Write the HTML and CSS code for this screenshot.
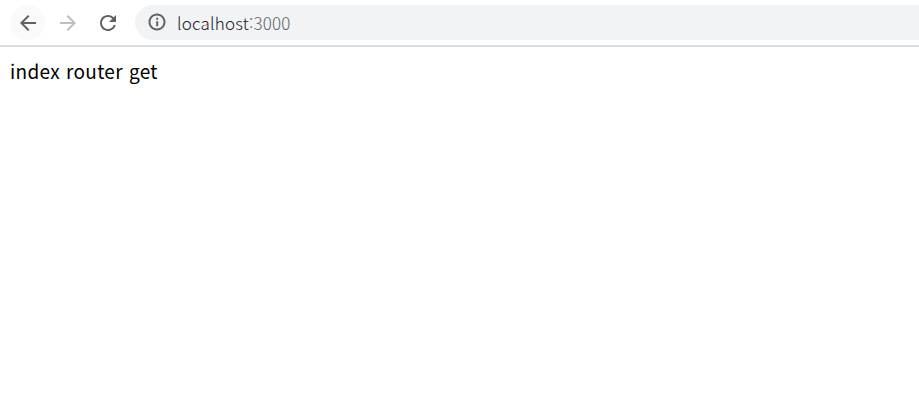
FILE: index.html
```html
<!DOCTYPE html>
<html lang="ko">
<head>
    <meta charset="UTF-8">
    <meta name="viewport" content="width=device-width, initial-scale=1.0">
    <title>localhost:3000</title>
    <link rel="stylesheet" href="styles.css">
</head>
<body>
    <div class="toolbar">
        <div class="nav-btn nav-btn-hover">
            <svg width="24" height="24" viewBox="0 0 24 24"><path fill="#5f6368" d="M20 11H7.83l5.59-5.59L12 4l-8 8 8 8 1.41-1.41L7.83 13H20v-2z"/></svg>
        </div>
        <div class="nav-btn">
            <svg width="24" height="24" viewBox="0 0 24 24"><path fill="#bdbfc2" d="M12 4l-1.41 1.41L16.17 11H4v2h12.17l-5.58 5.59L12 20l8-8z"/></svg>
        </div>
        <div class="nav-btn">
            <svg width="24" height="24" viewBox="0 0 24 24"><path fill="#5f6368" d="M17.65 6.35A7.958 7.958 0 0 0 12 4c-4.42 0-7.99 3.58-7.99 8s3.57 8 7.99 8c3.73 0 6.84-2.55 7.73-6h-2.08A5.99 5.99 0 0 1 12 18c-3.31 0-6-2.69-6-6s2.69-6 6-6c1.66 0 3.14.69 4.22 1.78L13 11h7V4l-2.35 2.35z"/></svg>
        </div>
        <div class="address-bar">
            <svg class="info-icon" width="20" height="20" viewBox="0 0 24 24"><path fill="#5f6368" d="M11 7h2.4v2.4H11zm0 4h2.4v6H11zm1-9.2C6.4 1.8 1.8 6.4 1.8 12S6.4 22.2 12 22.2 22.2 17.6 22.2 12 17.6 1.8 12 1.8zm0 18c-4.3 0-7.8-3.5-7.8-7.8S7.7 4.2 12 4.2s7.8 3.5 7.8 7.8-3.5 7.8-7.8 7.8z"/></svg>
            <span class="host">localhost</span><span class="port">:3000</span>
        </div>
    </div>
    <div class="content">index router get</div>
</body>
</html>
```

FILE: styles.css
```css
body {
    margin: 0;
    background: #fff;
    font-family: "Noto Sans CJK KR", "Noto Sans", sans-serif;
}
.toolbar {
    display: flex;
    align-items: center;
    height: 45px;
    padding-left: 10px;
    border-bottom: 2px solid #dadce0;
}
.nav-btn {
    display: flex;
    align-items: center;
    justify-content: center;
    width: 35px;
    height: 35px;
    margin-right: 5px;
    border-radius: 50%;
}
.nav-btn-hover {
    background: #fafafa;
}
.address-bar {
    display: flex;
    align-items: center;
    flex: 1;
    box-sizing: border-box;
    height: 35px;
    margin-left: 5px;
    padding: 0 0 1px 12px;
    background: #f1f3f4;
    border-radius: 18px 0 0 18px;
    font-size: 17px;
    font-weight: 300;
    letter-spacing: 0.2px;
}
.info-icon {
    margin-right: 10px;
}
.host {
    color: #202124;
}
.port {
    color: #5f6368;
}
.content {
    padding: 10px;
    font-size: 19px;
    letter-spacing: 0.3px;
    word-spacing: 0.5px;
    color: #000;
}
```
